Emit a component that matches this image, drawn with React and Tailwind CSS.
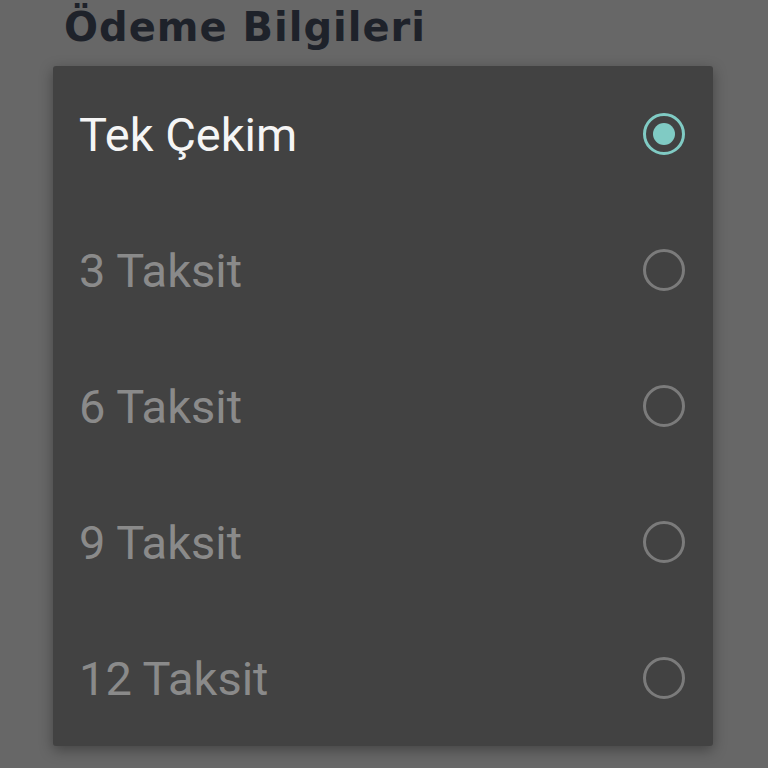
const options = ["Tek Çekim", "3 Taksit", "6 Taksit", "9 Taksit", "12 Taksit"];

function Radio({ checked }) {
  return (
    <svg width="46" height="46" viewBox="0 0 46 46">
      <circle
        cx="23"
        cy="23"
        r="19.5"
        fill="none"
        stroke={checked ? "#80cbc4" : "#7b7b7b"}
        strokeWidth="3"
      />
      {checked && <circle cx="23" cy="23" r="11" fill="#80cbc4" />}
    </svg>
  );
}

export default function App() {
  return (
    <div className="h-[768px] w-[768px] overflow-hidden bg-[#676767]">
      <div className="h-[66px] pl-[64px] pt-[4px]">
        <h1 className="text-[40px] font-bold leading-[46px] tracking-[1px] text-[#1e222a] [font-family:'DejaVu_Sans',sans-serif]">
          Ödeme Bilgileri
        </h1>
      </div>
      <div className="mx-[53px] h-[680px] w-[660px] rounded-[3px] bg-[#424242] shadow-[0_4px_14px_rgba(0,0,0,0.35)]">
        {options.map((opt, i) => (
          <div
            key={opt}
            className="flex h-[136px] items-center justify-between pl-[26px] pr-[26px]"
          >
            <span
              className={
                "text-[47px] leading-none [font-family:Roboto,sans-serif] " +
                (i === 0 ? "text-[#f5f5f5]" : "text-[#8a8a8a]")
              }
            >
              {opt}
            </span>
            <Radio checked={i === 0} />
          </div>
        ))}
      </div>
    </div>
  );
}
